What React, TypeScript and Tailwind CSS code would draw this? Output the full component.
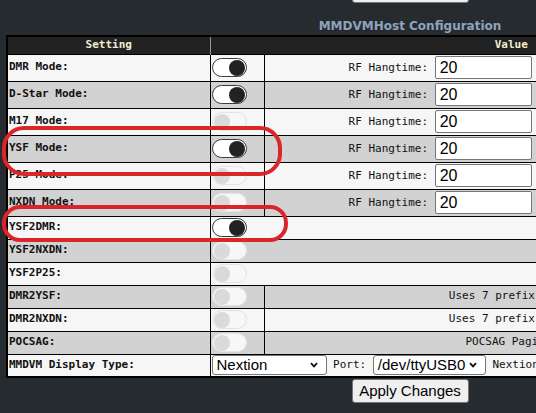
const modeRows = [
  { label: 'DMR Mode:', on: true },
  { label: 'D-Star Mode:', on: true },
  { label: 'M17 Mode:', on: false },
  { label: 'YSF Mode:', on: true },
  { label: 'P25 Mode:', on: false },
  { label: 'NXDN Mode:', on: false },
];

const crossRows = [
  { label: 'YSF2DMR:', on: true, note: '' },
  { label: 'YSF2NXDN:', on: false, note: '' },
  { label: 'YSF2P25:', on: false, note: '' },
  { label: 'DMR2YSF:', on: false, note: 'Uses 7 prefix on DMRGateway' },
  { label: 'DMR2NXDN:', on: false, note: 'Uses 7 prefix on DMRGateway' },
  { label: 'POCSAG:', on: false, note: 'POCSAG Paging Features' },
];

function Toggle({ on }: { on: boolean }) {
  if (on) {
    return (
      <span className="inline-flex items-center justify-end w-[35px] h-[19px] rounded-full border-[1.5px] border-[#3a3a3a] bg-white px-[1px] align-middle">
        <span className="w-[16px] h-[16px] rounded-full bg-[#222]" />
      </span>
    );
  }
  return (
    <span className="inline-flex items-center w-[35px] h-[19px] rounded-full border border-[#e4e4e4] bg-[#f7f7f7] px-[1px] align-middle">
      <span className="w-[16px] h-[16px] rounded-full bg-[#dadada]" />
    </span>
  );
}

function TextBox({ value }: { value: string }) {
  return (
    <span className="inline-flex items-center w-[97px] h-[23px] border border-[#767676] rounded-[2px] bg-white px-[4px] align-middle text-left text-[16px] text-black font-['Liberation_Sans',Arial,sans-serif]">
      {value}
    </span>
  );
}

function Select({ value, width }: { value: string; width: string }) {
  return (
    <span
      className={`inline-flex items-center justify-between h-[20px] border border-[#767676] rounded-[3px] bg-white pl-[4px] pr-[8px] align-middle text-[15px] text-black font-['Liberation_Sans',Arial,sans-serif] ${width}`}
    >
      <span>{value}</span>
      <svg width="8" height="6" viewBox="0 0 8 6" className="shrink-0">
        <path d="M1 1.2 L4 4.4 L7 1.2" fill="none" stroke="#111" strokeWidth="1.8" />
      </svg>
    </span>
  );
}

function Button() {
  return (
    <span className="flex items-center justify-center w-[117px] h-[24px] border border-[#767676] rounded-[3px] bg-[#efefef] text-[15px] text-black font-['Liberation_Sans',Arial,sans-serif]">
      Apply Changes
    </span>
  );
}

export default function App() {
  const rowBg = (i: number) => (i % 2 === 0 ? 'bg-[#f6f6f6]' : 'bg-[#d2d2d2]');

  return (
    <div className="relative w-full h-[413px] overflow-hidden bg-[#262b2f] font-['DejaVu_Sans_Mono',monospace] text-[11px] text-[#111]">
      <div className="w-[820px] flex flex-col items-center">
        <div className="-mt-[21px]">
          <Button />
        </div>
        <h2 className="mt-[15px] mb-[1px] h-[16px] leading-[16px] text-[12px] font-bold text-[#8fa3bc] font-['DejaVu_Sans',Verdana,sans-serif]">
          MMDVMHost Configuration
        </h2>
        <table className="w-[808px] table-fixed border-collapse border-2 border-black whitespace-nowrap">
          <colgroup>
            <col className="w-[203px]" />
            <col className="w-[54px]" />
            <col />
          </colgroup>
          <thead>
            <tr className="h-[16px] bg-[#222]">
              <th className="border-r border-r-[#999] text-center font-bold text-[#efeccf] p-0">Setting</th>
              <th colSpan={2} className="text-center font-bold text-[#efeccf] p-0">Value</th>
            </tr>
          </thead>
          <tbody>
            {modeRows.map((r, i) => (
              <tr key={r.label} className={`h-[27px] ${rowBg(i)}`}>
                <td className="border border-black pl-[1px] py-0 text-left font-bold">{r.label}</td>
                <td className="border border-black px-[1px] py-0 text-left">
                  <Toggle on={r.on} />
                </td>
                <td className="border border-black p-0 text-center">
                  RF Hangtime: <TextBox value="20" /> Net Hangtime: <TextBox value="20" />
                </td>
              </tr>
            ))}
            {crossRows.map((r, i) => (
              <tr key={r.label} className={`h-[23px] ${rowBg(i)}`}>
                <td className="border border-black pl-[1px] py-0 text-left font-bold">{r.label}</td>
                {r.note ? (
                  <>
                    <td className="border border-black px-[1px] py-0 text-left">
                      <Toggle on={r.on} />
                    </td>
                    <td className="border border-black p-0 text-center">{r.note}</td>
                  </>
                ) : (
                  <td colSpan={2} className="border border-black px-[1px] py-0 text-left">
                    <Toggle on={r.on} />
                  </td>
                )}
              </tr>
            ))}
            <tr className="h-[23px] bg-[#f6f6f6]">
              <td className="border border-black pl-[1px] py-0 text-left font-bold">MMDVM Display Type:</td>
              <td colSpan={2} className="border border-black px-[1px] py-0 text-left">
                <Select value="Nextion" width="w-[115px]" /> Port: <Select value="/dev/ttyUSB0" width="w-[113px]" /> Nextion Layout: <Select value="G4KLX" width="w-[180px]" />
              </td>
            </tr>
          </tbody>
        </table>
        <div className="mt-[1px]">
          <Button />
        </div>
      </div>

      <div className="absolute left-[2px] top-[126px] w-[280px] h-[50px] rounded-[22px] border-[4px] border-[#d9262b]" />
      <div className="absolute left-[2px] top-[205px] w-[286px] h-[37px] rounded-[18px] border-[4px] border-[#d9262b]" />
    </div>
  );
}
